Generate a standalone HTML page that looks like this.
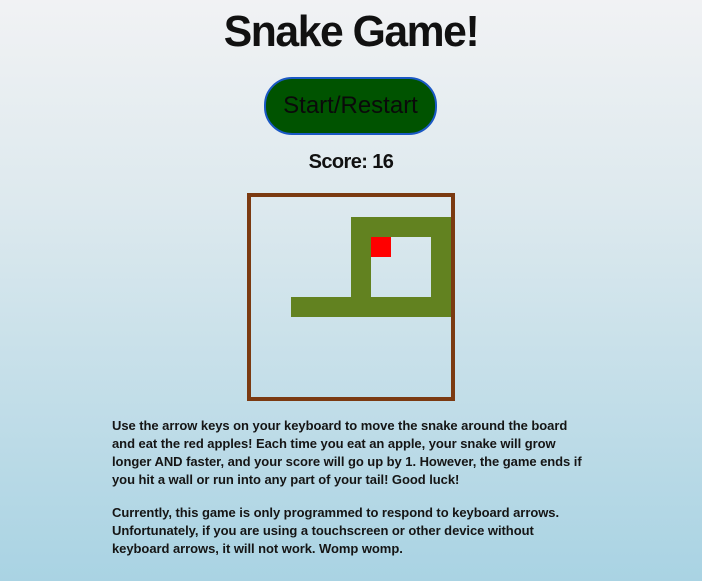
<!DOCTYPE html>
<html><head><style>
html,body{margin:0;padding:0}
body{width:702px;height:581px;overflow:hidden;position:relative;background:linear-gradient(#f1f2f4 0%,#dde9ee 35%,#a9d3e3 100%);font-family:"Liberation Sans",sans-serif;color:#111}
.t{position:absolute;left:0;width:702px;text-align:center;font-weight:bold}
#title{top:7px;font-size:44px;letter-spacing:-1.5px;transform:scaleX(0.97)}
#btn{position:absolute;left:264px;top:77px;width:169px;height:54px;border:2px solid #1a58c4;border-radius:28px;background:#005300;box-sizing:content-box;text-align:center;line-height:54px;font-size:24px;color:#0a0a0a}
#score{top:151px;font-size:20px;letter-spacing:-0.6px}
#board{position:absolute;left:247px;top:193px;width:200px;height:200px;border:4px solid #7b3a11}
.s{position:absolute;background:#628220}
.p{position:absolute;left:112px;font-size:13px;font-weight:bold;line-height:18px;letter-spacing:-0.05px;white-space:nowrap;color:#151515}
</style></head><body>
<div class="t" id="title">Snake Game!</div>
<div id="btn">Start/Restart</div>
<div class="t" id="score">Score: 16</div>
<div id="board">
<div class="s" style="left:100px;top:20px;width:100px;height:20px"></div>
<div class="s" style="left:100px;top:20px;width:20px;height:100px"></div>
<div class="s" style="left:180px;top:20px;width:20px;height:100px"></div>
<div class="s" style="left:40px;top:100px;width:160px;height:20px"></div>
<div style="position:absolute;left:120px;top:40px;width:20px;height:20px;background:#f00"></div>
</div>
<div class="p" style="top:417px">Use the arrow keys on your keyboard to move the snake around the board<br>and eat the red apples! Each time you eat an apple, your snake will grow<br>longer AND faster, and your score will go up by 1. However, the game ends if<br>you hit a wall or run into any part of your tail! Good luck!</div>
<div class="p" style="top:504px">Currently, this game is only programmed to respond to keyboard arrows.<br>Unfortunately, if you are using a touchscreen or other device without<br>keyboard arrows, it will not work. Womp womp.</div>
</body></html>
